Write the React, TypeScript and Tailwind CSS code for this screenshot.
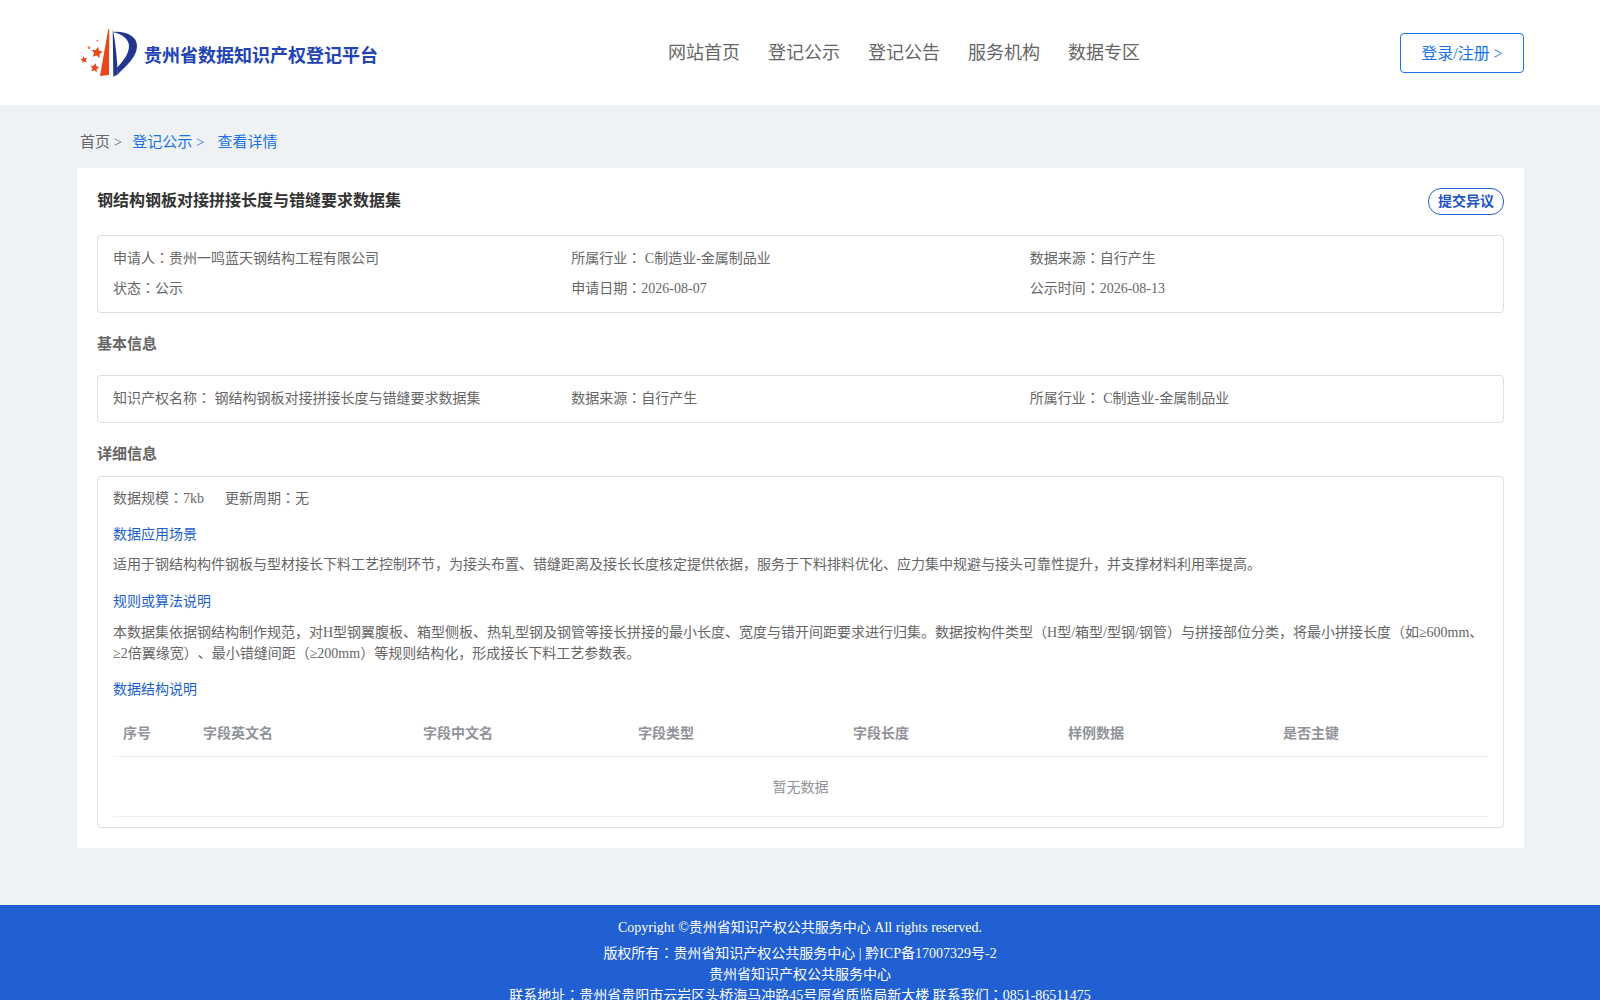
import React from "react";

function star(cx: number, cy: number, r: number, rot = 0) {
  const pts: string[] = [];
  for (let i = 0; i < 10; i++) {
    const rad = i % 2 === 0 ? r : r * 0.48;
    const a = ((-90 + rot + i * 36) * Math.PI) / 180;
    pts.push(`${(cx + rad * Math.cos(a)).toFixed(2)},${(cy + rad * Math.sin(a)).toFixed(2)}`);
  }
  return pts.join(" ");
}

function Logo() {
  return (
    <svg width="58" height="50" viewBox="0 0 58 50" className="shrink-0">
      <path d="M20 48 L28.3 1 L29.3 1 L29 47 Z" fill="#e8471c" />
      <path d="M32.7 1 L33.3 48.7 L37.7 46.5 C37 30 35.5 14 32.7 1 Z" fill="#24358f" />
      <path d="M33 4 C46 3 57 8 57 18 C57 29 46 38 37.5 46.5 L37 40 C43 33 49 26 49 18 C49 11 42 6 33 4 Z" fill="#24358f" />
      <polygon points={star(17, 24.7, 6, 10)} fill="#e8471c" />
      <polygon points={star(4, 31.7, 3.6, -10)} fill="#e8471c" />
      <polygon points={star(14.7, 39.9, 4.8, 10)} fill="#e8471c" />
      <circle cx="9" cy="19.7" r="1.4" fill="#ef7a50" />
      <circle cx="17.3" cy="12.7" r="0.9" fill="#ef7a50" />
    </svg>
  );
}

function C() {
  return <span className="leading-none font-['Noto_Sans_CJK_TC']">：</span>;
}

const headers = ["序号", "字段英文名", "字段中文名", "字段类型", "字段长度", "样例数据", "是否主键"];

export default function App() {
  return (
    <div className="h-[1000px] overflow-hidden bg-[#eff2f5] text-[14px] leading-[21px] text-[#666666] [text-spacing-trim:space-all] font-['Liberation_Serif','Noto_Sans_CJK_SC',serif]">
      <header className="h-[105px] bg-white flex items-start pl-[80px] pr-[76px]">
        <div className="flex items-center h-[50px] mt-[28px]">
          <Logo />
          <span className="ml-[6px] mt-[6px] text-[18px] leading-[24px] font-bold text-[#2243b6]">贵州省数据知识产权登记平台</span>
        </div>
        <nav className="ml-[290px] mt-[40px] flex gap-[28px] text-[18px] leading-[27px] text-[#666666]">
          <span>网站首页</span>
          <span>登记公示</span>
          <span>登记公告</span>
          <span>服务机构</span>
          <span>数据专区</span>
        </nav>
        <button className="ml-auto mt-[33px] h-[40px] w-[124px] border border-[#1a73e8] rounded-[4px] text-[16px] text-[#1a73e8] bg-white">登录/注册 &gt;</button>
      </header>

      <div className="h-[63px] pl-[80px] pt-[26px] text-[15px] leading-[22px] flex">
        <span>首页 &gt;</span>
        <span className="ml-[10px] text-[#1a73e8]">登记公示 &gt;</span>
        <span className="ml-[13px] text-[#1a73e8]">查看详情</span>
      </div>

      <main className="ml-[77px] mr-[76px] h-[680px] bg-white p-[20px]">
        <div className="flex justify-between items-start h-[47px]">
          <h1 className="mt-[1px] text-[16px] leading-[24px] font-bold text-[#333333]">钢结构钢板对接拼接长度与错缝要求数据集</h1>
          <button className="h-[27px] w-[76px] border border-[#2060d0] rounded-[13px] text-[14px] leading-[24px] font-bold text-[#2255c4] bg-white">提交异议</button>
        </div>

        <section className="h-[78px] border border-[#dcdfe6] rounded-[4px] px-[15px] pt-[12px] grid grid-cols-3 gap-y-[9px] content-start">
          <div>申请人<C />贵州一鸣蓝天钢结构工程有限公司</div>
          <div>所属行业<C /> C制造业-金属制品业</div>
          <div>数据来源<C />自行产生</div>
          <div>状态<C />公示</div>
          <div>申请日期<C />2026-08-07</div>
          <div>公示时间<C />2026-08-13</div>
        </section>

        <h2 className="mt-[20px] text-[15px] leading-[22px] font-bold">基本信息</h2>
        <section className="mt-[20px] h-[48px] border border-[#dcdfe6] rounded-[4px] px-[15px] pt-[12px] grid grid-cols-3">
          <div>知识产权名称<C /> 钢结构钢板对接拼接长度与错缝要求数据集</div>
          <div>数据来源<C />自行产生</div>
          <div>所属行业<C /> C制造业-金属制品业</div>
        </section>

        <h2 className="mt-[20px] text-[15px] leading-[22px] font-bold">详细信息</h2>
        <section className="mt-[11px] h-[352px] border border-[#dcdfe6] rounded-[4px] px-[15px] pt-[11px]">
          <div className="flex gap-[21px]">
            <span>数据规模<C />7kb</span>
            <span>更新周期<C />无</span>
          </div>
          <div className="mt-[15px] text-[#1a5fd0]">数据应用场景</div>
          <p className="mt-[9px]">适用于钢结构构件钢板与型材接长下料工艺控制环节，为接头布置、错缝距离及接长长度核定提供依据，服务于下料排料优化、应力集中规避与接头可靠性提升，并支撑材料利用率提高。</p>
          <div className="mt-[16px] text-[#1a5fd0]">规则或算法说明</div>
          <p className="mt-[10px]">本数据集依据钢结构制作规范，对H型钢翼腹板、箱型侧板、热轧型钢及钢管等接长拼接的最小长度、宽度与错开间距要求进行归集。数据按构件类型（H型/箱型/型钢/钢管）与拼接部位分类，将最小拼接长度（如≥600mm、≥2倍翼缘宽）、最小错缝间距（≥200mm）等规则结构化，形成接长下料工艺参数表。</p>
          <div className="mt-[15px] text-[#1a5fd0]">数据结构说明</div>
          <div className="mt-[9px]">
            <div className="h-[48px] pt-[2px] grid grid-cols-[80px_220px_215px_215px_215px_215px_1fr] items-center border-b border-[#ebeef5] font-bold text-[#909399]">
              {headers.map((h) => (
                <div key={h} className="px-[10px]">{h}</div>
              ))}
            </div>
            <div className="h-[60px] pt-[2px] flex items-center justify-center border-b border-[#ebeef5] text-[#909399]">暂无数据</div>
          </div>
        </section>
      </main>

      <footer className="mt-[57px] h-[95px] bg-[#2060d2] text-white text-center pt-[12px]">
        <div className="mb-[5px]">Copyright ©贵州省知识产权公共服务中心 All rights reserved.</div>
        <div>版权所有<C />贵州省知识产权公共服务中心 | 黔ICP备17007329号-2</div>
        <div>贵州省知识产权公共服务中心</div>
        <div>联系地址<C />贵州省贵阳市云岩区头桥海马冲路45号原省质监局新大楼 联系我们<C />0851-86511475</div>
      </footer>
    </div>
  );
}
